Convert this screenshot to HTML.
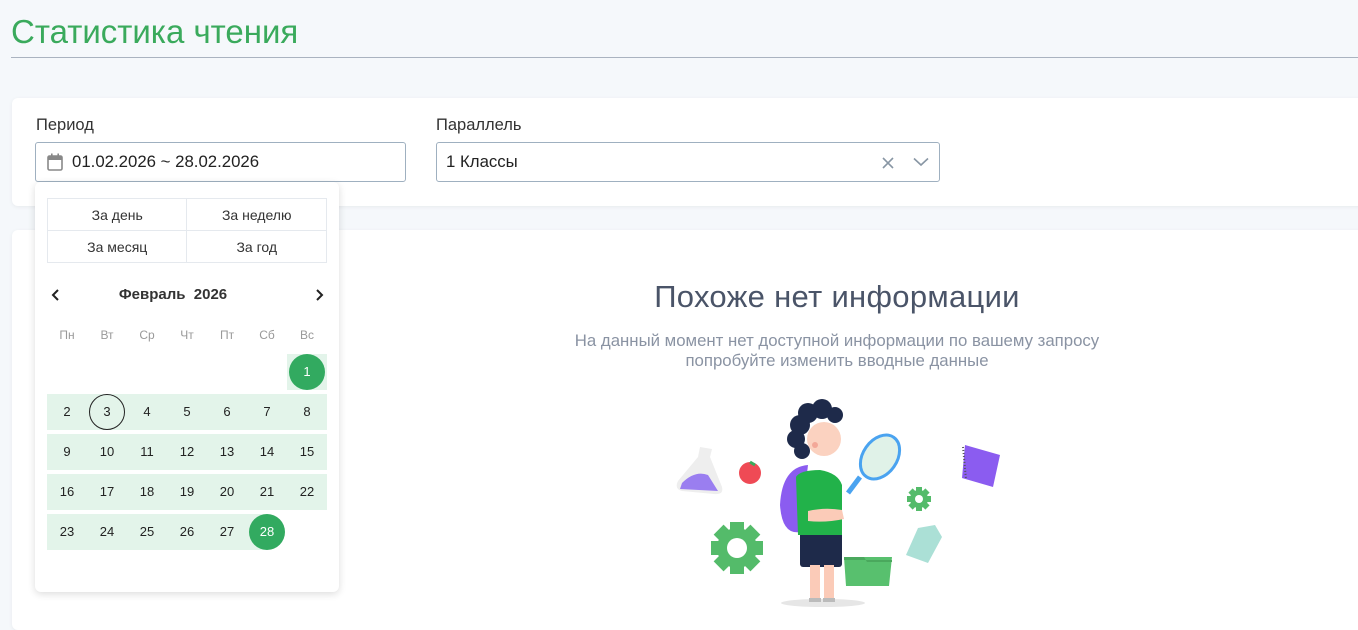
<!DOCTYPE html>
<html><head><meta charset="utf-8"><style>
*{box-sizing:border-box;margin:0;padding:0}
body{width:1358px;height:622px;overflow:hidden;background:#f5f8fb;font-family:"Liberation Sans",sans-serif;position:relative;color:#222}
.title{position:absolute;left:11px;top:13px;font-size:33px;color:#3aaa5c}
.hr{position:absolute;left:11px;top:57px;width:1347px;height:1px;background:#aab3c0}
.card{position:absolute;background:#fff;border-radius:6px;box-shadow:0 1px 4px rgba(0,0,0,.06)}
.lbl{position:absolute;font-size:16.5px;color:#333}
.inp{position:absolute;height:40px;border:1px solid #9fb0c0;border-radius:3px;background:#fff;font-size:16.8px;line-height:38px;color:#222}
.pop{position:absolute;left:35px;top:182px;width:304px;height:410px;background:#fff;border-radius:6px;box-shadow:0 2px 8px rgba(0,0,0,.14)}
.qt{position:absolute;left:12px;top:16px;width:280px;border-collapse:collapse}
.qt td{border:1px solid #e5e9ee;height:32px;width:140px;text-align:center;font-size:14px;color:#333}
.d{position:absolute;width:40px;height:36px;line-height:36px;text-align:center;font-size:13px;color:#222}
.bg{background:#e3f4ea}
.sel{position:absolute;width:36px;height:36px;border-radius:50%;background:#32aa60;color:#fff;text-align:center;line-height:36px;font-size:13px}
.wd{position:absolute;top:146px;width:40px;text-align:center;font-size:12px;color:#999}
</style></head><body>
<div class="title">Статистика чтения</div>
<div class="hr"></div>
<div class="card" style="left:12px;top:98px;width:1360px;height:108px"></div>
<div class="lbl" style="left:36px;top:116px">Период</div>
<div class="inp" style="left:35px;top:142px;width:371px;padding-left:36px">01.02.2026 ~ 28.02.2026
<svg style="position:absolute;left:11px;top:10px" width="16" height="18" viewBox="0 0 16 18"><rect x="1" y="3" width="14" height="14" rx="1.5" fill="none" stroke="#888" stroke-width="1.6"/><rect x="1" y="3" width="14" height="4" fill="#888"/><rect x="4" y="0.5" width="1.6" height="4" fill="#888"/><rect x="10.4" y="0.5" width="1.6" height="4" fill="#888"/></svg></div>
<div class="lbl" style="left:436px;top:116px">Параллель</div>
<div class="inp" style="left:436px;top:142px;width:504px;padding-left:9px">1 Классы
<svg style="position:absolute;left:444px;top:13px" width="14" height="14" viewBox="0 0 14 14"><path d="M2 2L12 12M12 2L2 12" stroke="#8896a4" stroke-width="1.6"/></svg>
<svg style="position:absolute;left:476px;top:14px" width="16" height="10" viewBox="0 0 16 10"><path d="M1 1.5L8 8L15 1.5" stroke="#8896a4" stroke-width="1.6" fill="none"/></svg></div>
<div class="card" style="left:12px;top:230px;width:1360px;height:400px"></div>
<div style="position:absolute;left:537px;top:279px;width:600px;text-align:center;font-size:31px;color:#4a5468;letter-spacing:0.3px">Похоже нет информации</div>
<div style="position:absolute;left:537px;top:331px;width:600px;text-align:center;font-size:16.8px;color:#8a93a3;line-height:20px">На данный момент нет доступной информации по вашему запросу<br>попробуйте изменить вводные данные</div>
<svg style="position:absolute;left:660px;top:395px" width="360" height="220" viewBox="0 0 360 220">
<ellipse cx="163" cy="208" rx="42" ry="4" fill="#e6e6e6"/>
<path d="M40 52L52 54L50 62L62 92Q64 100 54 99L22 96Q14 94 18 86L38 62Z" fill="#eee"/><path d="M22 88Q35 75 48 80L58 96L20 94Z" fill="#9a7ef0"/>
<circle cx="90" cy="78" r="11" fill="#ef4a55"/><path d="M90 67L95 70" stroke="#3aaa5c" stroke-width="3"/>
<g fill="#54bb6a"><circle cx="77" cy="153" r="20"/><rect x="70" y="127" width="14" height="52"/><rect x="51" y="146" width="52" height="14"/><rect x="70" y="127" width="14" height="52" transform="rotate(45 77 153)"/><rect x="70" y="127" width="14" height="52" transform="rotate(-45 77 153)"/></g><circle cx="77" cy="153" r="10" fill="#fff"/>
<g fill="#54bb6a"><circle cx="259" cy="104" r="9"/><rect x="256" y="92" width="6" height="24"/><rect x="247" y="101" width="24" height="6"/><rect x="256" y="92" width="6" height="24" transform="rotate(45 259 104)"/><rect x="256" y="92" width="6" height="24" transform="rotate(-45 259 104)"/></g><circle cx="259" cy="104" r="4" fill="#fff"/>
<path d="M305 50L340 60L333 92L302 83Z" fill="#8b5cf0"/><path d="M303 52L306 84" stroke="#555" stroke-width="2" stroke-dasharray="1 2"/>
<path d="M258 133L275 130L282 142L268 168L246 160Z" fill="#abe0d6"/>
<path d="M184 162H232L229 191H186Z" fill="#58c06e"/><path d="M184 162H204L207 167H232V165H184Z" fill="#4aa85d"/>
<path d="M148 70Q122 72 120 110Q122 140 140 137Z" fill="#8b5cf0"/>
<rect x="140" y="136" width="42" height="36" rx="3" fill="#1e2a4a"/>
<rect x="150" y="170" width="10" height="36" fill="#fbcbb8"/><rect x="164" y="170" width="10" height="36" fill="#fbcbb8"/>
<rect x="149" y="203" width="12" height="4" fill="#bbb"/><rect x="163" y="203" width="12" height="4" fill="#bbb"/>
<path d="M136 82Q140 75 160 75Q178 78 182 90V140H138Z" fill="#22b24a"/>
<path d="M148 116Q165 112 182 115L184 124Q165 128 148 126Z" fill="#fbcbb8"/>
<circle cx="164" cy="44" r="17" fill="#fbd2c0"/><circle cx="155" cy="50" r="3" fill="#f3a898"/>
<g fill="#1e2a4a"><circle cx="140" cy="30" r="10"/><circle cx="148" cy="18" r="10"/><circle cx="162" cy="14" r="10"/><circle cx="175" cy="20" r="8"/><circle cx="136" cy="44" r="9"/><circle cx="142" cy="56" r="8"/></g>
<path d="M188 98L200 82" stroke="#4aa3f0" stroke-width="5"/>
<ellipse cx="220" cy="62" rx="17" ry="24" transform="rotate(35 220 62)" fill="#e0f2e8" stroke="#4aa3f0" stroke-width="3"/>
</svg>
<div class="pop">
<table class="qt"><tr><td>За день</td><td>За неделю</td></tr><tr><td>За месяц</td><td>За год</td></tr></table>
<svg style="position:absolute;left:16px;top:107px" width="10" height="12" viewBox="0 0 10 12"><path d="M7 1L2 6L7 11" stroke="#222" stroke-width="2" fill="none"/></svg>
<div style="position:absolute;left:0;width:304px;top:104px;text-align:center;font-size:15px;font-weight:bold;color:#333;padding-right:28px">Февраль&nbsp; 2026</div>
<svg style="position:absolute;left:279px;top:107px" width="10" height="12" viewBox="0 0 10 12"><path d="M3 1L8 6L3 11" stroke="#222" stroke-width="2" fill="none"/></svg>
<div class="wd" style="left:12px">Пн</div><div class="wd" style="left:52px">Вт</div><div class="wd" style="left:92px">Ср</div><div class="wd" style="left:132px">Чт</div><div class="wd" style="left:172px">Пт</div><div class="wd" style="left:212px">Сб</div><div class="wd" style="left:252px">Вс</div>
<div class="d bg" style="left:252px;top:172px"></div><div class="sel" style="left:254px;top:172px">1</div>
<div class="bg" style="position:absolute;left:12px;top:212px;width:280px;height:36px"></div>
<div class="bg" style="position:absolute;left:12px;top:252px;width:280px;height:36px"></div>
<div class="bg" style="position:absolute;left:12px;top:292px;width:280px;height:36px"></div>
<div class="bg" style="position:absolute;left:12px;top:332px;width:220px;height:36px"></div>
<div class="d" style="left:12px;top:212px">2</div><div class="d" style="left:52px;top:212px"><span style="position:absolute;left:2px;top:0;width:36px;height:36px;border:1px solid #222;border-radius:50%"></span>3</div><div class="d" style="left:92px;top:212px">4</div><div class="d" style="left:132px;top:212px">5</div><div class="d" style="left:172px;top:212px">6</div><div class="d" style="left:212px;top:212px">7</div><div class="d" style="left:252px;top:212px">8</div>
<div class="d" style="left:12px;top:252px">9</div><div class="d" style="left:52px;top:252px">10</div><div class="d" style="left:92px;top:252px">11</div><div class="d" style="left:132px;top:252px">12</div><div class="d" style="left:172px;top:252px">13</div><div class="d" style="left:212px;top:252px">14</div><div class="d" style="left:252px;top:252px">15</div>
<div class="d" style="left:12px;top:292px">16</div><div class="d" style="left:52px;top:292px">17</div><div class="d" style="left:92px;top:292px">18</div><div class="d" style="left:132px;top:292px">19</div><div class="d" style="left:172px;top:292px">20</div><div class="d" style="left:212px;top:292px">21</div><div class="d" style="left:252px;top:292px">22</div>
<div class="d" style="left:12px;top:332px">23</div><div class="d" style="left:52px;top:332px">24</div><div class="d" style="left:92px;top:332px">25</div><div class="d" style="left:132px;top:332px">26</div><div class="d" style="left:172px;top:332px">27</div><div class="sel" style="left:214px;top:332px">28</div>
</div>
</body></html>
